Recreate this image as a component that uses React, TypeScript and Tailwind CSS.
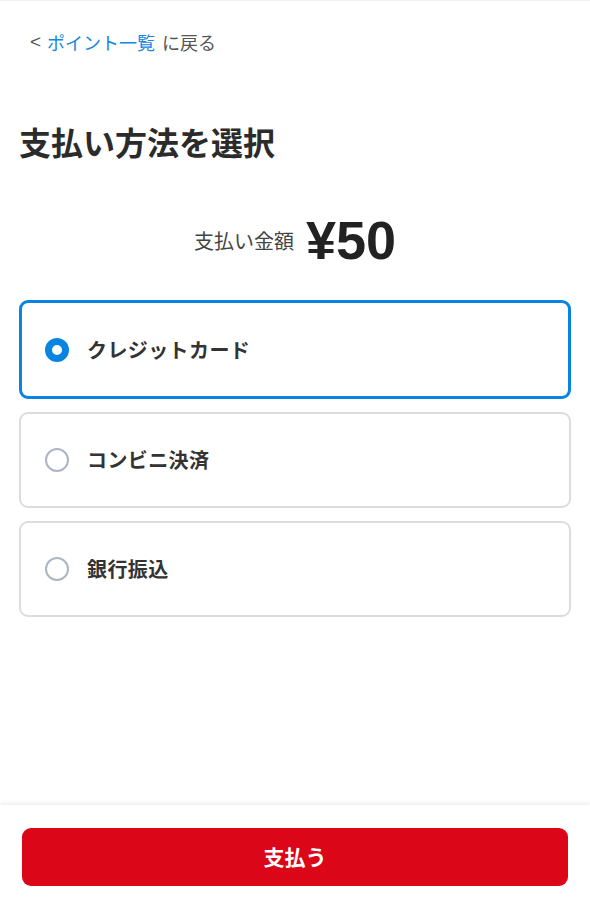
import { useState } from "react";

const methods = ["クレジットカード", "コンビニ決済", "銀行振込"];

const jp = "font-['Hiragino_Sans','Noto_Sans_CJK_JP',sans-serif]";

function App() {
  const [selected, setSelected] = useState(0);

  return (
    <div className={`h-screen flex flex-col bg-white border-t border-[#f0f0f0] ${jp}`}>
      <div className="flex-1">
        {/* back link */}
        <div className="pt-[29px] pl-[30px] flex items-center text-[18px] leading-[24px] text-[#555]">
          <span className="font-['Liberation_Sans',sans-serif] text-[19px]">&lt;</span>
          <a className="ml-[6px] text-[#1586e0]">ポイント一覧</a>
          <span className="ml-[7px]">に戻る</span>
        </div>

        <h1 className="mt-[67px] pl-[19px] text-[32px] leading-[40px] font-bold text-[#2b2b2b]">
          支払い方法を選択
        </h1>

        <div className="mt-[49px] h-[60px] flex items-center justify-center gap-[12px]">
          <span className="text-[20px] text-[#444] mt-[2px]">支払い金額</span>
          <span className="text-[54px] font-bold text-[#222] font-['Liberation_Sans',sans-serif]">
            ¥50
          </span>
        </div>

        {/* payment methods */}
        <div className="mt-[30px] px-[19px] flex flex-col gap-[13px]">
          {methods.map((m, i) => {
            const on = selected === i;
            return (
              <button
                key={m}
                onClick={() => setSelected(i)}
                className={`flex items-center text-left rounded-[9px] bg-white ${
                  on
                    ? "h-[99px] border-[3px] border-[#0a84e3] pl-[23px]"
                    : "h-[96px] border-2 border-[#dcdcdc] pl-[24px]"
                }`}
              >
                <span
                  className={`w-6 h-6 rounded-full bg-white shrink-0 ${
                    on ? "border-[7px] border-[#0a84e3]" : "border-2 border-[#aab6c3]"
                  }`}
                />
                <span className="ml-[18px] text-[20px] font-bold text-[#333] tracking-[0.02em]">
                  {m}
                </span>
              </button>
            );
          })}
        </div>
      </div>

      {/* bottom bar */}
      <div className="shrink-0 bg-white pt-[23px] pb-[19px] px-[22px] shadow-[0_-2px_4px_rgba(0,0,0,0.07)]">
        <button className="w-full h-[58px] rounded-[9px] bg-[#db0718] text-white text-[21px] font-bold">
          支払う
        </button>
      </div>
    </div>
  );
}

export default App;
